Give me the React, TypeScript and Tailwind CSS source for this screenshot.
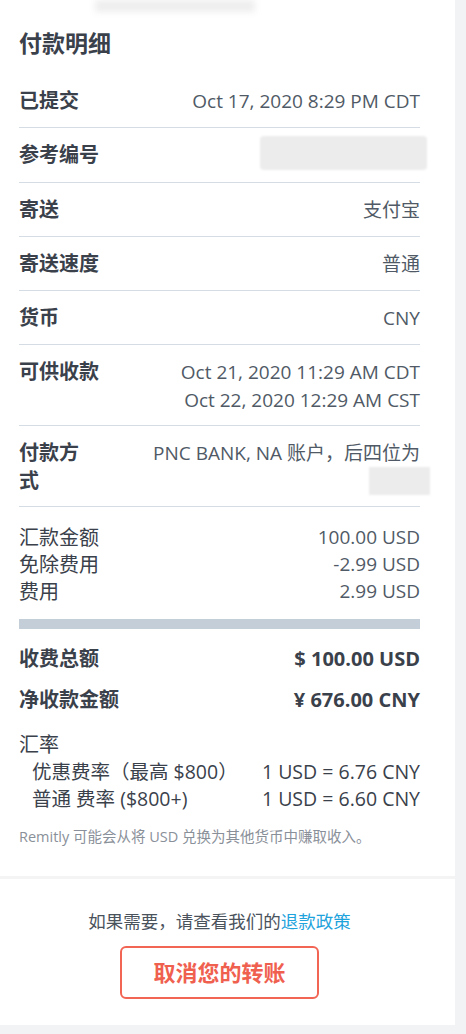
export default function App() {
  const rows = [
    { label: '已提交', value: ['Oct 17, 2020 8:29 PM CDT'] },
    { label: '参考编号', value: null },
    { label: '寄送', value: ['支付宝'] },
    { label: '寄送速度', value: ['普通'] },
    { label: '货币', value: ['CNY'] },
    { label: '可供收款', value: ['Oct 21, 2020 11:29 AM CDT', 'Oct 22, 2020 12:29 AM CST'] },
  ]

  return (
    <div
      className="min-h-[1034px] bg-[#f2f3f5] text-[#3a414b] flex"
      style={{ fontFamily: '"Open Sans", "Noto Sans CJK SC", sans-serif' }}
    >
      <div className="w-[455px] shrink-0">
        {/* Details card */}
        <section className="relative bg-white pl-[19px] pr-[35px] pt-[28px] pb-[29px]">
          <div className="absolute left-[95px] top-0 w-[160px] h-[12px] bg-[#eeeeee] blur-[3px]" />
          <h1 className="text-[23px] leading-[30px] font-bold">付款明细</h1>

          <div className="mt-[16px]">
            {rows.map((r) => (
              <div
                key={r.label}
                className={`flex justify-between gap-4 pt-[13px] border-b border-[#d6dce3] text-[19px] leading-[28px] ${
                  r.value && r.value.length > 1 ? 'pb-[11px]' : 'pb-[12px]'
                }`}
              >
                <div className="font-bold shrink-0 text-[20px]">{r.label}</div>
                {r.value ? (
                  <div className="text-right text-[#505a66]">
                    {r.value.map((v) => (
                      <div key={v}>{v}</div>
                    ))}
                  </div>
                ) : (
                  <div className="w-[167px] h-[34px] -mr-[7px] -mt-[5px] bg-[#ececec] rounded-sm blur-[1px]" />
                )}
              </div>
            ))}

            <div className="flex justify-between gap-4 pt-[13px] pb-[11px] border-b border-[#d6dce3] text-[19px] leading-[28px]">
              <div className="font-bold text-[20px] w-[66px] shrink-0">付款方式</div>
              <div className="flex flex-col items-end text-[#505a66]">
                <div>PNC BANK, NA 账户，后四位为</div>
                <div className="w-[61px] h-[28px] -mr-[10px] bg-[#ececec] blur-[1px]" />
              </div>
            </div>
          </div>

          {/* Amounts */}
          <div className="pt-[17px] text-[19px] leading-[27px]">
            <div className="flex justify-between">
              <span className="text-[20px]">汇款金额</span>
              <span className="text-[#505a66]">100.00 USD</span>
            </div>
            <div className="flex justify-between">
              <span className="text-[20px]">免除费用</span>
              <span className="text-[#505a66]">-2.99 USD</span>
            </div>
            <div className="flex justify-between">
              <span className="text-[20px]">费用</span>
              <span className="text-[#505a66]">2.99 USD</span>
            </div>
          </div>

          <div className="mt-[14px] h-[10px] bg-[#c4ced9]" />

          <div className="mt-[16px] flex justify-between text-[20px] leading-[28px] font-bold">
            <span>收费总额</span>
            <span>$ 100.00 USD</span>
          </div>
          <div className="mt-[13px] flex justify-between text-[20px] leading-[28px] font-bold">
            <span>净收款金额</span>
            <span>¥ 676.00 CNY</span>
          </div>

          {/* Rates */}
          <div className="mt-[17px] text-[19.5px] leading-[27px]">
            <div className="text-[20px]">汇率</div>
            <div className="flex justify-between pl-[13px]">
              <span>优惠费率（最高 $800）</span>
              <span>1 USD = 6.76 CNY</span>
            </div>
            <div className="flex justify-between pl-[13px]">
              <span>普通 费率 ($800+)</span>
              <span>1 USD = 6.60 CNY</span>
            </div>
          </div>

          <p className="mt-[15px] text-[14.5px] leading-[20px] text-[#8a9099]">
            Remitly 可能会从将 USD 兑换为其他货币中赚取收入。
          </p>
        </section>

        <div className="h-[3px] bg-[#f4f4f5]" />

        {/* Refund / cancel */}
        <section className="bg-white pl-[19px] pr-[35px] pt-[30px] pb-[26px] flex flex-col items-center">
          <p className="text-[17.5px] leading-[24px] text-[#4a525c]">
            如果需要，请查看我们的<a href="#" className="text-[#1fa3dc]">退款政策</a>
          </p>
          <button className="mt-[13px] w-[199px] h-[53px] border-2 border-[#f26555] rounded-[6px] text-[22px] font-bold text-[#f0604f]">
            取消您的转账
          </button>
        </section>
      </div>
    </div>
  )
}
